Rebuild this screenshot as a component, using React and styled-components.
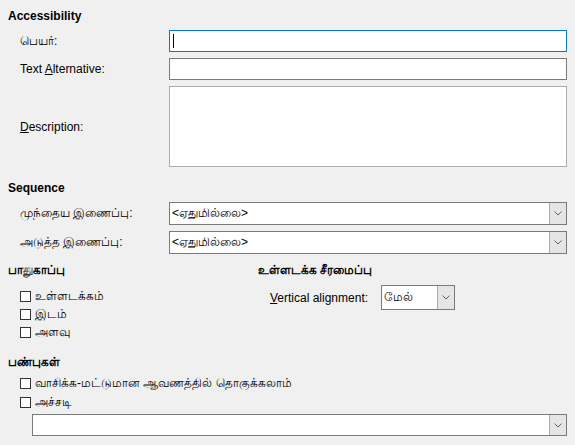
import React from 'react';
import styled, { createGlobalStyle } from 'styled-components';

const Global = createGlobalStyle`
  body {
    margin: 0;
    background: #f0f0f0;
  }
`;

const Page = styled.div`
  width: 575px;
  height: 445px;
  box-sizing: border-box;
  padding: 8px 8px 0 8px;
  background: #f0f0f0;
  font-family: "Liberation Sans", "Noto Sans", sans-serif;
  font-size: 12px;
  color: #000;
  display: flex;
  flex-direction: column;
`;

const Heading = styled.div`
  font-weight: bold;
  height: 16px;
  line-height: 16px;
  margin-top: ${p => p.$top || 0}px;
`;

const FieldGrid = styled.div`
  display: grid;
  grid-template-columns: 149px 398px;
  row-gap: 6px;
  padding-left: 12px;
  margin-top: ${p => p.$top || 0}px;
  align-items: center;
`;

const Label = styled.span`
  white-space: nowrap;
  u { text-decoration: underline; }
`;

const TextBox = styled.div`
  height: ${p => p.$h || 22}px;
  box-sizing: border-box;
  background: #fff;
  border: 1px solid ${p => (p.$focus ? '#0078d7' : p.$soft ? '#adadad' : '#7a7a7a')};
  display: flex;
  align-items: center;
  padding-left: 3px;
`;

const Caret = styled.span`
  width: 1px;
  height: 14px;
  background: #000;
`;

const ComboBox = styled.div`
  height: ${p => p.$h || 23}px;
  width: ${p => (p.$w ? `${p.$w}px` : 'auto')};
  box-sizing: border-box;
  background: #fff;
  border: 1px solid #7a7a7a;
  display: flex;
  align-items: stretch;
`;

const ComboText = styled.span`
  flex: 1;
  padding-left: 2px;
  display: flex;
  align-items: center;
  white-space: nowrap;
`;

const DropButton = styled.span`
  width: 17px;
  box-sizing: border-box;
  background: #e5e5e5;
  border-left: 1px solid #adadad;
  display: flex;
  align-items: center;
  justify-content: center;
`;

const Columns = styled.div`
  display: grid;
  grid-template-columns: 250px 1fr;
  margin-top: 8px;
`;

const Column = styled.div`
  display: flex;
  flex-direction: column;
`;

const CheckList = styled.div`
  display: flex;
  flex-direction: column;
  padding-left: 12px;
  margin-top: ${p => p.$top || 0}px;
`;

const CheckRow = styled.label`
  display: flex;
  align-items: center;
  gap: 4px;
  height: ${p => p.$h || 18}px;
  white-space: nowrap;
`;

const Box = styled.span`
  width: 11px;
  height: 11px;
  box-sizing: border-box;
  border: 1px solid #333;
  background: #fff;
  flex: none;
`;

const AlignRow = styled.div`
  display: flex;
  align-items: center;
  padding-left: 12px;
  margin-top: 7px;
`;

const AlignLabel = styled.span`
  width: 111px;
  white-space: nowrap;
`;

const BottomCombo = styled.div`
  margin: 2px 0 0 24px;
`;

function Chevron() {
  return (
    <svg width="8" height="5" viewBox="0 0 8 5">
      <path d="M0.5 0.5 L4 4 L7.5 0.5" fill="none" stroke="#606060" strokeWidth="1" />
    </svg>
  );
}

function Combo({ value, w, h }) {
  return (
    <ComboBox $w={w} $h={h}>
      <ComboText>{value}</ComboText>
      <DropButton>
        <Chevron />
      </DropButton>
    </ComboBox>
  );
}

function Check({ children, h }) {
  return (
    <CheckRow $h={h}>
      <Box />
      {children}
    </CheckRow>
  );
}

export default function App() {
  return (
    <>
      <Global />
      <Page>
        <Heading>Accessibility</Heading>
        <FieldGrid $top={6}>
          <Label>பெயர்:</Label>
          <TextBox $focus>
            <Caret />
          </TextBox>
          <Label>
            Text <u>A</u>lternative:
          </Label>
          <TextBox />
          <Label>
            <u>D</u>escription:
          </Label>
          <TextBox $soft $h={81} />
        </FieldGrid>

        <Heading $top={13}>Sequence</Heading>
        <FieldGrid $top={6}>
          <Label>முந்தைய இணைப்பு:</Label>
          <Combo value="<ஏதுமில்லை>" />
          <Label>அடுத்த இணைப்பு:</Label>
          <Combo value="<ஏதுமில்லை>" />
        </FieldGrid>

        <Columns>
          <Column>
            <Heading>பாதுகாப்பு</Heading>
            <CheckList $top={9}>
              <Check>உள்ளடக்கம்</Check>
              <Check>இடம்</Check>
              <Check>அளவு</Check>
            </CheckList>
          </Column>
          <Column>
            <Heading>உள்ளடக்க சீரமைப்பு</Heading>
            <AlignRow>
              <AlignLabel>
                <u>V</u>ertical alignment:
              </AlignLabel>
              <Combo value="மேல்" w={74} h={25} />
            </AlignRow>
          </Column>
        </Columns>

        <Heading $top={13}>பண்புகள்</Heading>
        <CheckList $top={4}>
          <Check h={19}>வாசிக்க-மட்டுமான ஆவணத்தில் தொகுக்கலாம்</Check>
          <Check h={19}>அச்சடி</Check>
        </CheckList>
        <BottomCombo>
          <Combo value="" h={22} />
        </BottomCombo>
      </Page>
    </>
  );
}
